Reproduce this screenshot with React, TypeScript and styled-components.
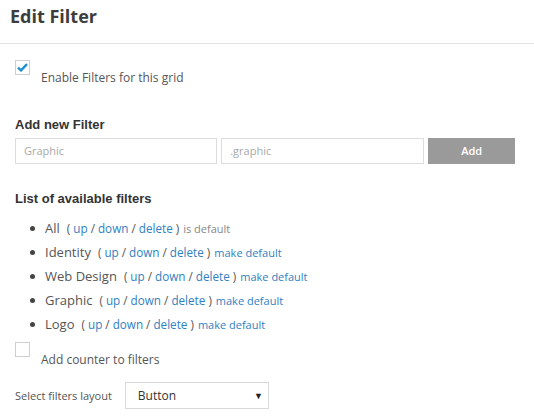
import React from "react";
import styled, { createGlobalStyle } from "styled-components";

const Global = createGlobalStyle`
  html, body { margin: 0; padding: 0; background: #fff; }
  body { font-family: "Open Sans", Arial, sans-serif; color: #555; }
  * { box-sizing: border-box; }
`;

const Page = styled.div`
  width: 534px;
  height: 419px;
  overflow: hidden;
  background: #fff;
`;

const Header = styled.div`
  height: 44px;
  border-bottom: 1px solid #e3e3e3;
  padding: 2px 0 0 10px;
`;

const Title = styled.h1`
  margin: 0;
  font-family: "Open Sans", sans-serif;
  font-weight: 700;
  font-size: 18px;
  line-height: 28px;
  color: #3d3d3d;
`;

const Body = styled.div`
  padding: 16px 19px 0 15px;
  display: flex;
  flex-direction: column;
`;

const CheckRow = styled.label<{ $mt?: number }>`
  display: flex;
  align-items: flex-start;
  gap: 11px;
  margin-top: ${(p) => p.$mt ?? 0}px;
`;

const Box = styled.span`
  width: 15px;
  height: 15px;
  border: 1px solid #cfcfcf;
  background: #fff;
  display: flex;
  align-items: center;
  justify-content: center;
  flex-shrink: 0;
`;

const CheckLabel = styled.span`
  font-size: 12px;
  line-height: 16px;
  color: #555;
  padding-top: 10px;
`;

const SectionTitle = styled.div<{ $mt: number }>`
  font-family: "Liberation Sans", Arial, sans-serif;
  font-weight: 700;
  font-size: 13px;
  line-height: 16px;
  color: #333;
  margin-top: ${(p) => p.$mt}px;
`;

const InputRow = styled.div`
  display: flex;
  gap: 4px;
  margin-top: 5px;
`;

const Input = styled.div<{ $w: number }>`
  width: ${(p) => p.$w}px;
  height: 26px;
  border: 1px solid #dcdcdc;
  padding: 0 8px;
  font-size: 11px;
  line-height: 24px;
  color: #a8a8a8;
`;

const AddButton = styled.div`
  width: 87px;
  height: 26px;
  background: #9a9a9a;
  color: #fff;
  font-family: "Open Sans", sans-serif;
  font-weight: 600;
  font-size: 11px;
  line-height: 26px;
  text-align: center;
`;

const List = styled.ul`
  margin: 9px 0 0 0;
  padding: 0 0 0 16px;
  list-style: none;
`;

const Item = styled.li`
  height: 24px;
  display: flex;
  align-items: center;
  position: relative;
  font-size: 13px;
  color: #555;
  &::before {
    content: "";
    position: absolute;
    left: -1px;
    top: 10px;
    width: 5px;
    height: 5px;
    border-radius: 50%;
    background: #444;
  }
`;

const Name = styled.span`
  margin-left: 14px;
  margin-right: 7px;
`;

const Paren = styled.span`
  font-size: 11.7px;
  white-space: pre;
  margin-right: 4px;
`;

const Small = styled.span<{ $muted?: boolean }>`
  font-size: 11px;
  color: ${(p) => (p.$muted ? "#888" : "#555")};
`;

const Link = styled.a`
  color: #2f7fc1;
  text-decoration: none;
`;

const DefaultLink = styled.a`
  font-size: 11px;
  color: #2f7fc1;
  text-decoration: none;
`;

const SelectRow = styled.div`
  display: flex;
  align-items: center;
  gap: 13px;
  margin-top: 14px;
`;

const SelectLabel = styled.span`
  font-size: 11px;
  color: #555;
`;

const Select = styled.div`
  width: 144px;
  height: 27px;
  border: 1px solid #d9d9d9;
  display: flex;
  align-items: center;
  justify-content: space-between;
  padding: 0 5px 0 12px;
  font-size: 12px;
  color: #333;
`;

const Arrow = styled.span`
  font-size: 9px;
  color: #222;
`;

const filters = [
  { name: "All", isDefault: true },
  { name: "Identity" },
  { name: "Web Design" },
  { name: "Graphic" },
  { name: "Logo" },
];

export default function App() {
  return (
    <Page>
      <Global />
      <Header>
        <Title>Edit Filter</Title>
      </Header>
      <Body>
        <CheckRow>
          <Box>
            <svg width="11" height="9" viewBox="0 0 11 9">
              <path d="M1 4.6 L4 7.4 L10 1.2" fill="none" stroke="#1e8fd0" strokeWidth="2.4" />
            </svg>
          </Box>
          <CheckLabel>Enable Filters for this grid</CheckLabel>
        </CheckRow>
        <SectionTitle $mt={31}>Add new Filter</SectionTitle>
        <InputRow>
          <Input $w={203}>Graphic</Input>
          <Input $w={204}>.graphic</Input>
          <AddButton>Add</AddButton>
        </InputRow>
        <SectionTitle $mt={27}>List of available filters</SectionTitle>
        <List>
          {filters.map((f) => (
            <Item key={f.name}>
              <Name>{f.name}</Name>
              <Paren>
                {"( "}
                <Link>up</Link>
                {" / "}
                <Link>down</Link>
                {" / "}
                <Link>delete</Link>
                {" )"}
              </Paren>
              {f.isDefault ? <Small $muted>is default</Small> : <DefaultLink>make default</DefaultLink>}
            </Item>
          ))}
        </List>
        <CheckRow $mt={6}>
          <Box />
          <CheckLabel>Add counter to filters</CheckLabel>
        </CheckRow>
        <SelectRow>
          <SelectLabel>Select filters layout</SelectLabel>
          <Select>
            <span>Button</span>
            <Arrow>▼</Arrow>
          </Select>
        </SelectRow>
      </Body>
    </Page>
  );
}
